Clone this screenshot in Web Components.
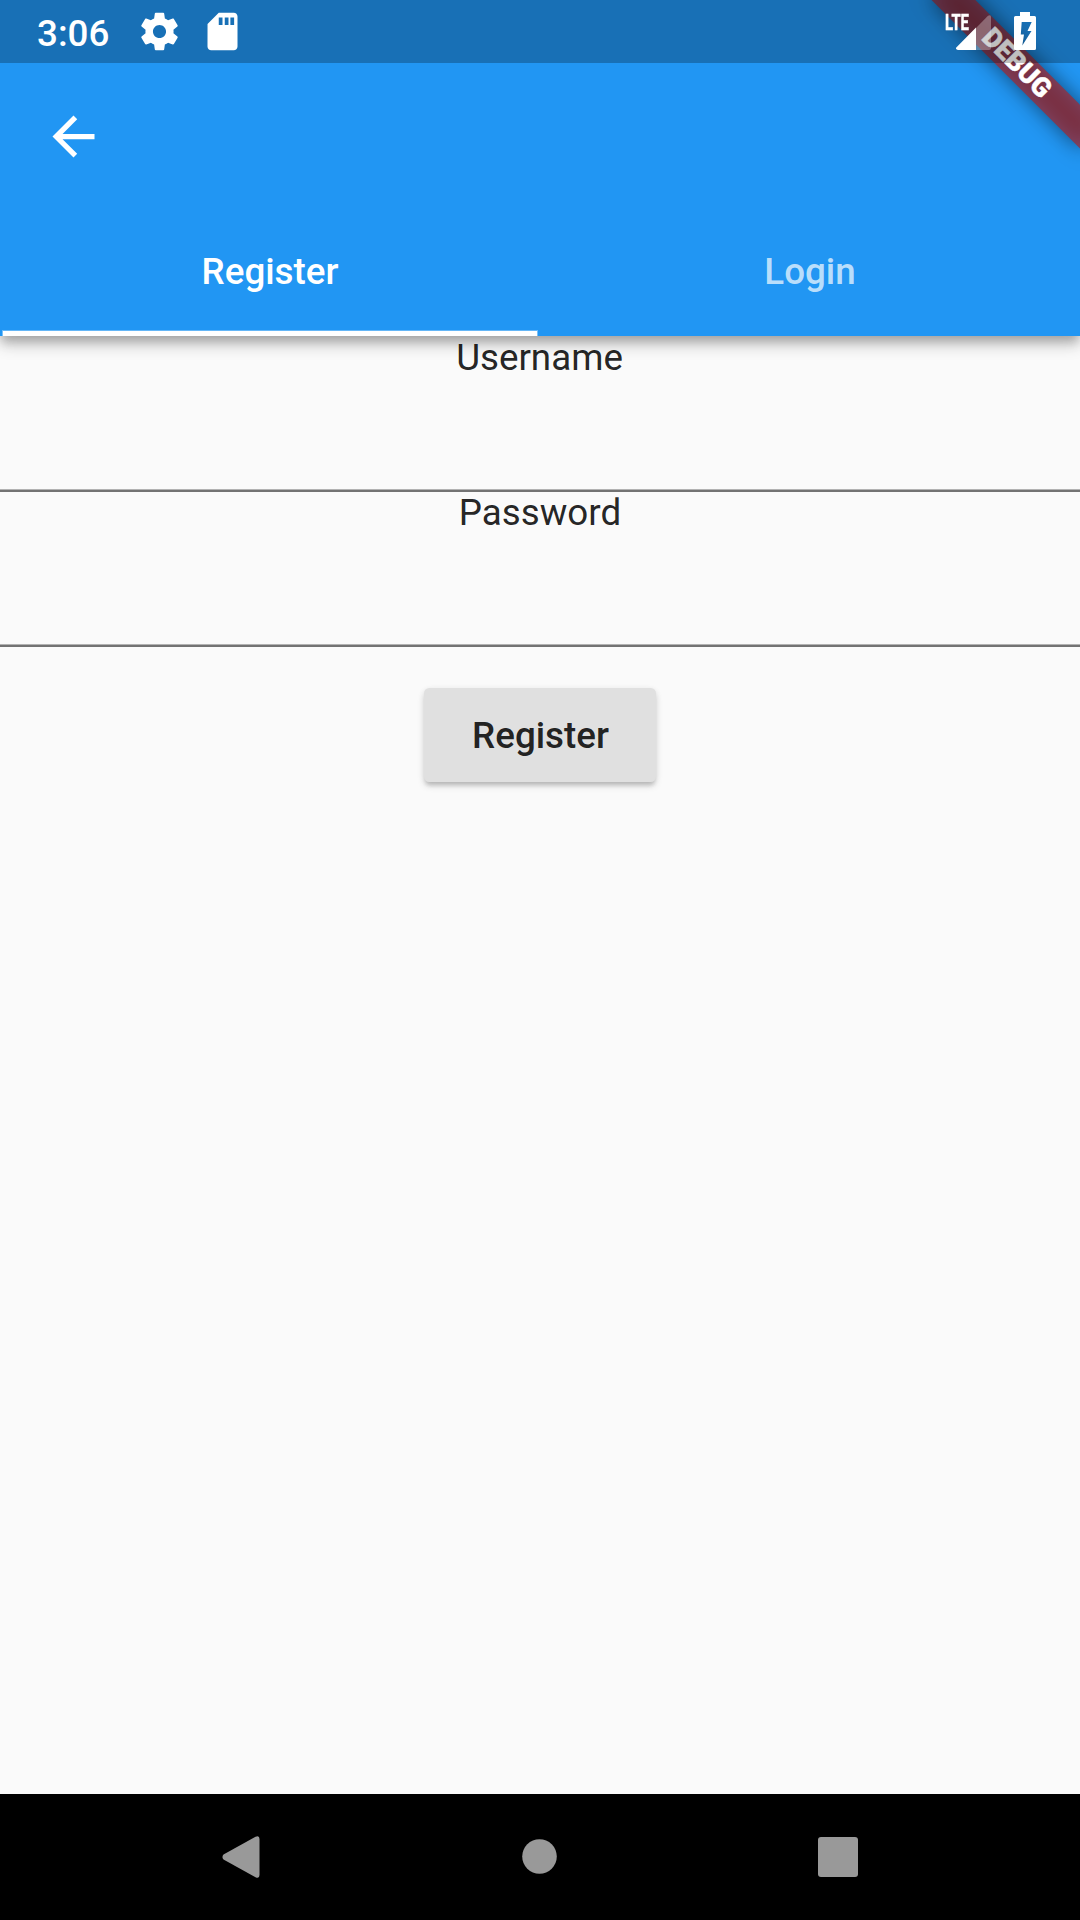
<!DOCTYPE html>
<html lang="en">
<head>
<meta charset="utf-8">
<title>Register</title>
<style>
html, body { margin: 0; height: 100%; overflow: hidden; }
body { font-family: Roboto, sans-serif; font-size: 36.75px; background: #fafafa; }
</style>
</head>
<body>
<app-screen></app-screen>
<script>
const define = (name, html) => {
  const template = document.createElement('template');
  template.innerHTML = html;
  customElements.define(name, class extends HTMLElement {
    constructor() {
      super();
      this.attachShadow({ mode: 'open' }).append(template.content.cloneNode(true));
    }
  });
};

define('status-bar', `
<style>
:host { position: absolute; top: 0; left: 0; right: 0; height: 63px; box-sizing: border-box; z-index: 5; display: flex; justify-content: space-between; background: rgba(0,0,0,.25); color: #fff; padding: 0 44px 0 37px; }
.group { display: flex; }
time { font-size: 36.75px; font-weight: 500; line-height: 43px; margin-top: 12px; width: 95px; }
svg { display: block; fill: #fff; }
.gear { width: 45px; height: 45px; margin: 9px 0 0 5px; }
.sd { width: 45px; height: 45px; margin: 9px 0 0 18px; }
.lte { font-size: 22.5px; line-height: 22px; font-weight: 700; -webkit-text-stroke: .5px #fff; transform: scaleX(.66); transform-origin: left; margin-top: 11px; width: 11px; white-space: nowrap; }
.signal { width: 35px; height: 35px; margin: 15px 0 0; }
.battery { width: 22px; height: 38px; margin: 12px 0 0 23px; }
</style>
<div class="group">
  <time>3:06</time>
  <svg class="gear" viewBox="0 0 24 24"><path d="M19.43 12.98c.04-.32.07-.64.07-.98s-.03-.66-.07-.98l2.11-1.65c.19-.15.24-.42.12-.64l-2-3.46c-.12-.22-.39-.3-.61-.22l-2.49 1c-.52-.4-1.08-.73-1.69-.98l-.38-2.65C14.46 2.18 14.25 2 14 2h-4c-.25 0-.46.18-.49.42l-.38 2.65c-.61.25-1.17.59-1.69.98l-2.49-1c-.23-.09-.49 0-.61.22l-2 3.46c-.13.22-.07.49.12.64l2.11 1.65c-.04.32-.07.65-.07.98s.03.66.07.98l-2.11 1.65c-.19.15-.24.42-.12.64l2 3.46c.12.22.39.3.61.22l2.49-1c.52.4 1.08.73 1.69.98l.38 2.65c.03.24.24.42.49.42h4c.25 0 .46-.18.49-.42l.38-2.65c.61-.25 1.17-.59 1.69-.98l2.49 1c.23.09.49 0 .61-.22l2-3.46c.12-.22.07-.49-.12-.64l-2.11-1.65zM12 15.5c-1.93 0-3.5-1.57-3.5-3.5s1.57-3.5 3.5-3.5 3.5 1.57 3.5 3.5-1.57 3.5-3.5 3.5z"/></svg>
  <svg class="sd" viewBox="0 0 24 24"><path d="M18 2h-8L4.02 8 4 20c0 1.1.9 2 2 2h12c1.1 0 2-.9 2-2V4c0-1.1-.9-2-2-2zm-6 6.500h-2V4.500h2v4zm3.200 0h-2V4.500h2v4zm3 0h-2V4.500h2v4z"/></svg>
</div>
<div class="group">
  <span class="lte">LTE</span>
  <svg class="signal" viewBox="0 0 35 35"><path d="M20 13L32 .8Q35 -1 35 2V33Q35 35 33 35H20Z" opacity=".3"/><path d="M20 12.5V35H2Q-1.5 34 .8 32Z"/></svg>
  <svg class="battery" viewBox="0 0 22 38"><path fill-rule="evenodd" d="M6 0H16V4H20.5Q22 4 22 5.5V36.5Q22 38 20.5 38H1.5Q0 38 0 36.5V5.5Q0 4 1.5 4H6ZM7.7 10L6.8 22.5H10L8.3 33.5L17.500 19H13.500L17.700 10Z"/></svg>
</div>`);

define('debug-banner', `
<style>
:host { position: absolute; top: 0; left: 1080px; width: 0; height: 0; transform: rotate(45deg); z-index: 4; }
.shade, .ribbon { position: absolute; left: -105px; top: 73.5px; width: 210px; height: 31.5px; }
.shade { background: rgba(0,0,0,.5); filter: blur(10.4px); }
.ribbon { background: rgba(183,28,28,.627); color: #fff; font-size: 26.775px; line-height: 31.5px; font-weight: 900; text-align: center; -webkit-text-stroke: .5px #fff; }
</style>
<div class="shade"></div><div class="ribbon">DEBUG</div>`);

define('app-bar', `
<style>
:host { display: flex; flex-direction: column; height: 336px; box-sizing: border-box; padding-top: 63px; background: #2196f3; position: relative; z-index: 2; box-shadow: 0 7px 9px -2px rgba(0,0,0,.18), 0 10px 14px 0 rgba(0,0,0,.16), 0 2px 18px 0 rgba(0,0,0,.08); }
.tools { height: 147px; display: flex; align-items: center; padding-left: 42px; }
svg { width: 63px; height: 63px; fill: #fff; }
.tabs { display: flex; height: 126px; }
</style>
<div class="tools"><svg viewBox="0 0 24 24"><path d="M20 11H7.83l5.59-5.59L12 4l-8 8 8 8 1.41-1.41L7.83 13H20v-2z"/></svg></div>
<div class="tabs"><slot></slot></div>`);

define('app-tab', `
<style>
:host { flex: 1; display: flex; flex-direction: column; color: rgba(255,255,255,.7); font-weight: 500; }
:host([selected]) { color: #fff; }
.label { flex: 1; display: flex; align-items: center; justify-content: center; padding-top: 3px; }
.bar { height: 5px; margin: 0 2px; border: 1px solid transparent; border-bottom: 0; background-clip: padding-box; }
:host([selected]) .bar { background-color: #fff; border-color: rgba(255,255,255,.3) rgba(255,255,255,.4); }
</style>
<div class="label"><slot></slot></div><div class="bar"></div>`);

define('text-field', `
<style>
:host { display: block; }
.label { height: 43px; line-height: 43px; text-align: center; color: rgba(0,0,0,.87); padding-right: var(--nudge, 1px); }
.entry { height: 110px; }
</style>
<div class="label"><slot></slot></div><div class="entry"></div>`);

define('raised-button', `
<style>
:host { display: flex; align-items: center; justify-content: center; width: 232px; height: 94.5px; box-sizing: border-box; padding: 2px 0 0 1px; border-radius: 5.25px; background: #e0e0e0; color: rgba(0,0,0,.87); font-weight: 500; box-shadow: 0 5px 4px -2px rgba(0,0,0,.14), 0 4px 7px 0 rgba(0,0,0,.13), 0 1px 6px 0 rgba(0,0,0,.06); }
</style>
<slot></slot>`);

define('nav-bar', `
<style>
:host { display: flex; height: 126px; background: #000; justify-content: space-between; align-items: center; padding: 0 222px; }
svg { fill: #999; display: block; }
.home { margin-bottom: 1px; }
</style>
<svg width="38" height="42" viewBox="0 0 38 42"><path d="M1.5 18.6L33.5 .8Q37.5 -1 37.5 3V39Q37.5 43 33.5 41.2L1.5 23.4Q-.6 21 1.5 18.6Z"/></svg>
<svg class="home" width="35" height="35" viewBox="0 0 35 35"><circle cx="17.5" cy="17.5" r="17.3"/></svg>
<svg width="40" height="40" viewBox="0 0 40 40"><rect width="40" height="40" rx="3"/></svg>`);

define('app-screen', `
<style>
:host { display: flex; flex-direction: column; width: 1080px; height: 1920px; position: relative; overflow: hidden; background: #fafafa; }
main { flex: 1; display: flex; flex-direction: column; }
hr { border: 0; margin: 0 0 -1px; height: 3px; background: linear-gradient(#b2b2b2 1px, #737373 1px); flex: none; }
.password { --nudge: 0px; }
.action { display: flex; justify-content: center; margin-top: 41.7px; }
</style>
<app-bar><app-tab selected>Register</app-tab><app-tab>Login</app-tab></app-bar>
<main>
  <text-field>Username</text-field><hr>
  <text-field class="password">Password</text-field><hr>
  <div class="action"><raised-button>Register</raised-button></div>
</main>
<nav-bar></nav-bar>
<status-bar></status-bar>
<debug-banner></debug-banner>`);
</script>
</body>
</html>
